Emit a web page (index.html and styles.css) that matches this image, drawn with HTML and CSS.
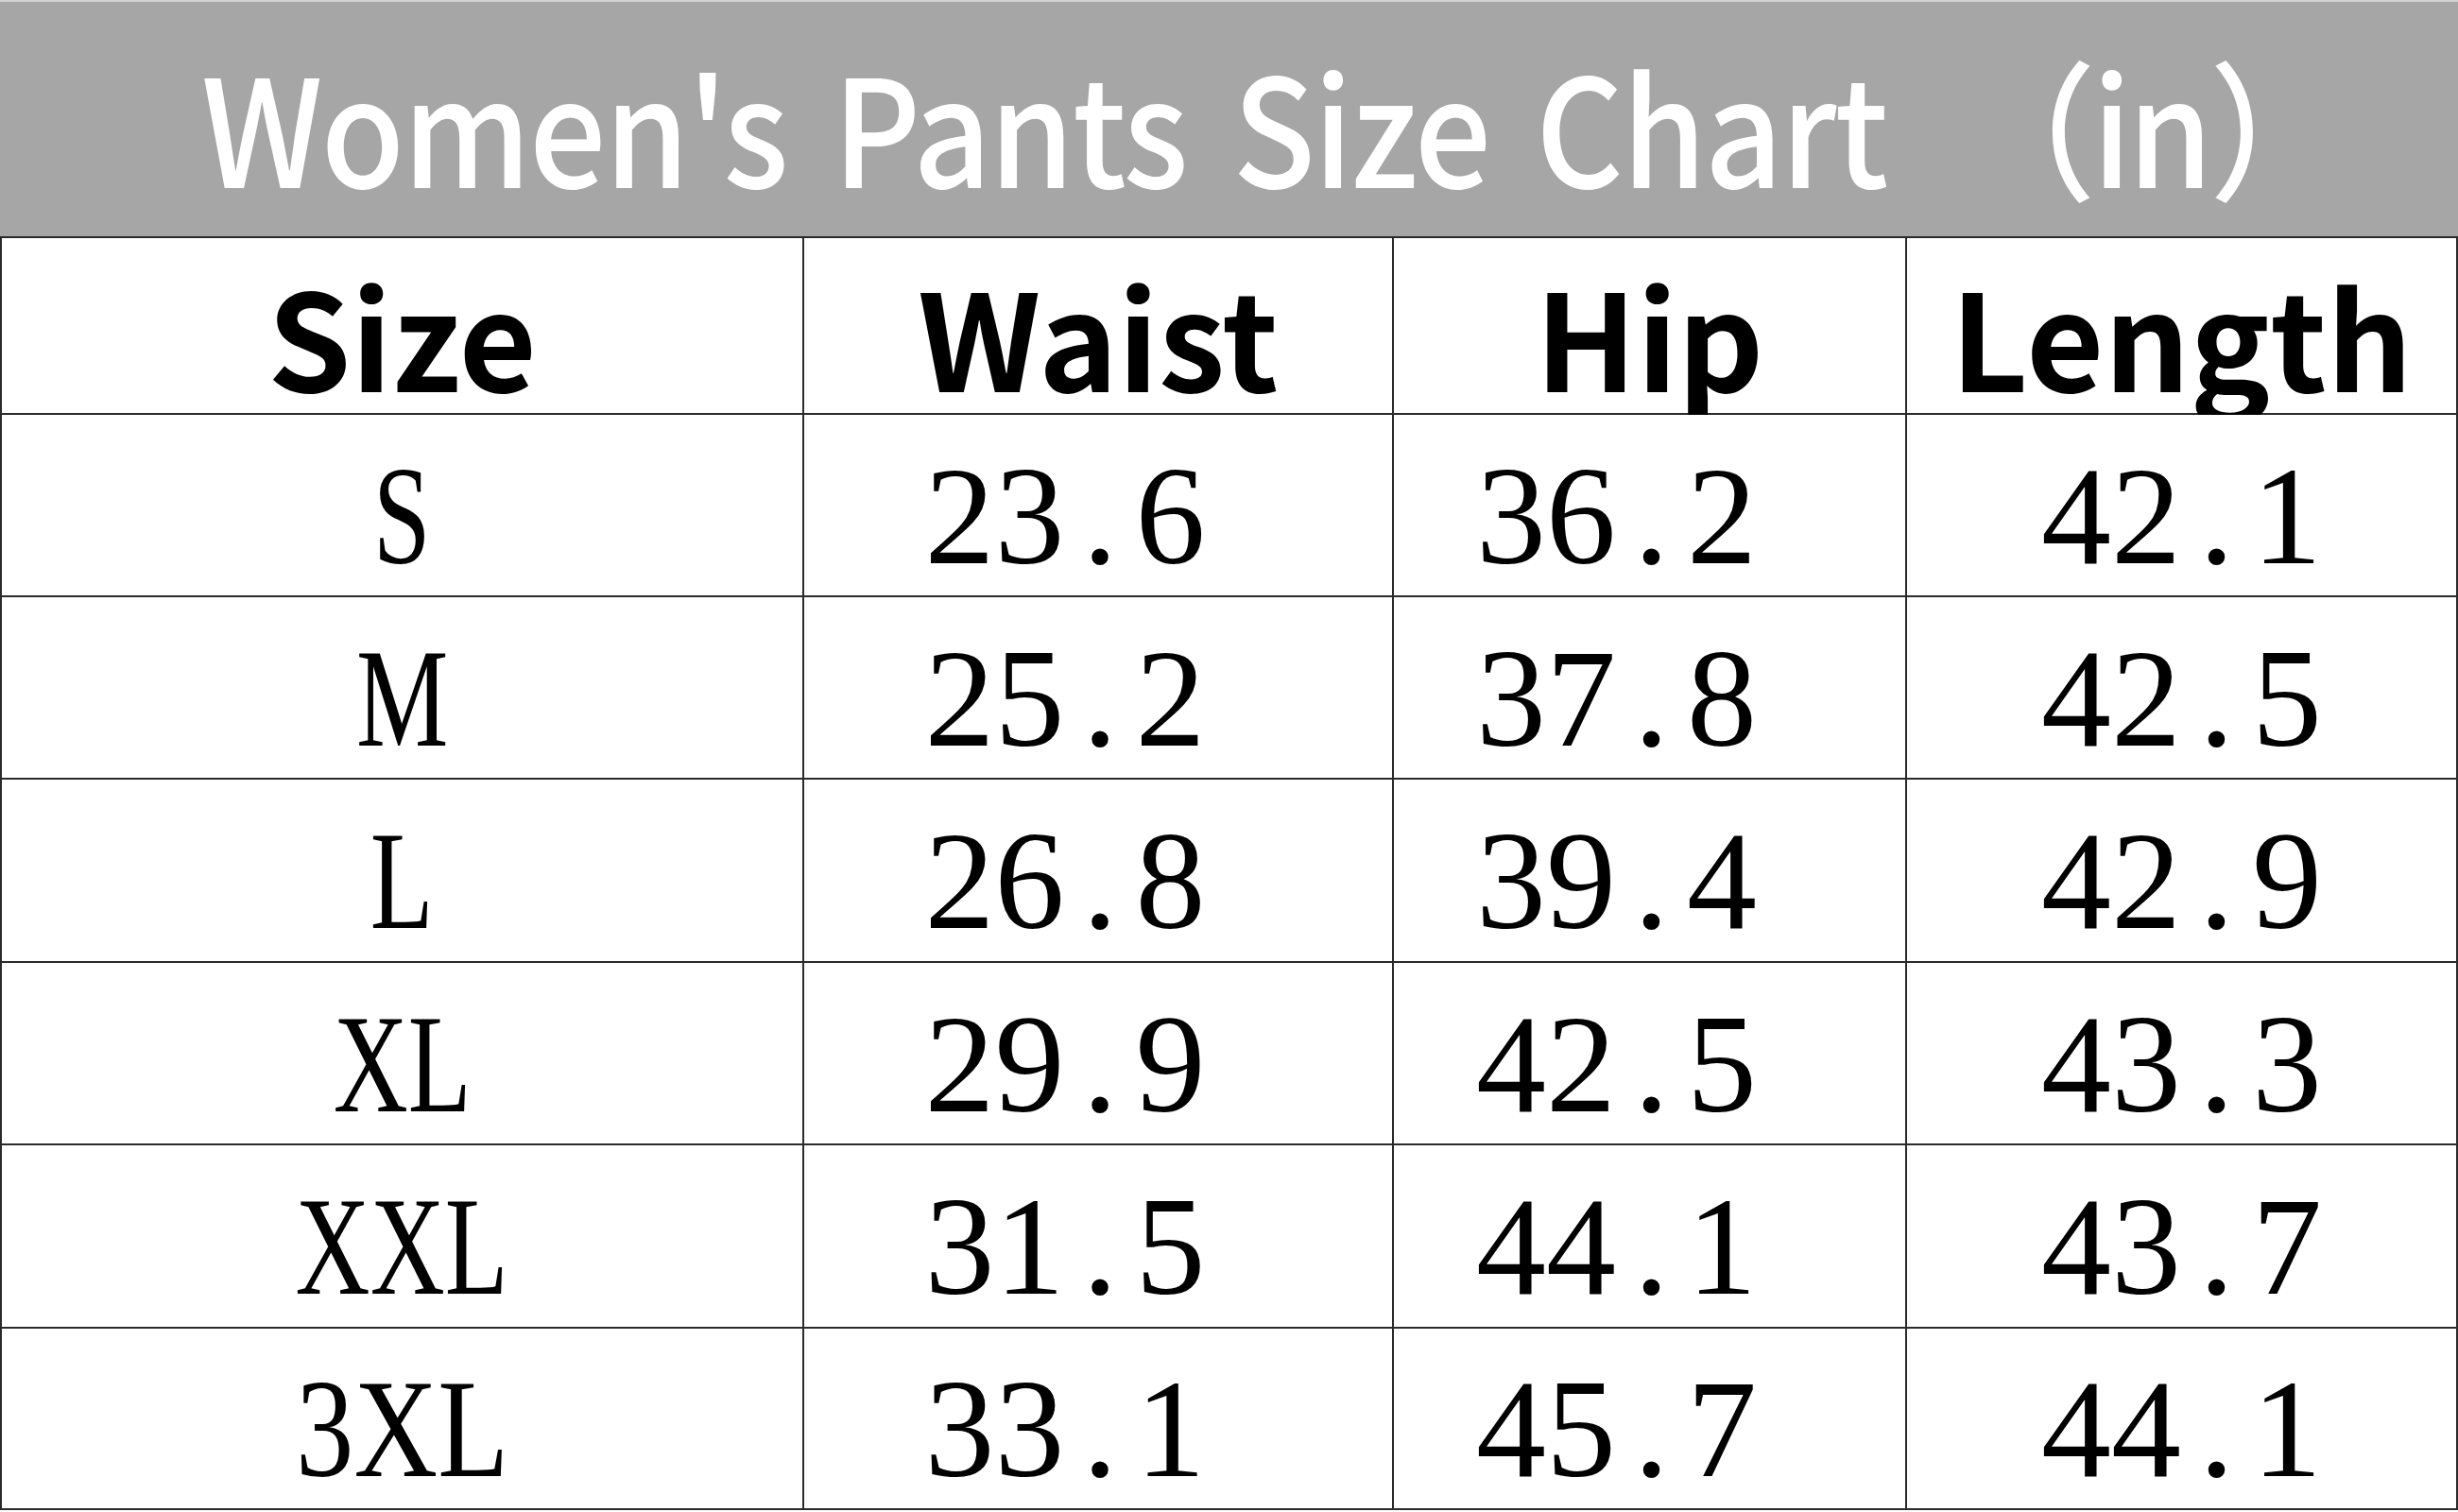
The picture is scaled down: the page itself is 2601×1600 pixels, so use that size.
FILE: index.html
```html
<!DOCTYPE html>
<html lang="en">
<head>
<meta charset="utf-8">
<title>Women's Pants Size Chart</title>
<link rel="stylesheet" href="styles.css">
</head>
<body>
<div class="chart">
  <div class="title"><span class="title-text"><span class="title-main">Women's Pants Size Chart</span><span class="title-unit">（in）</span></span></div>
  <div class="grid">
    <div class="cell head">Size</div>
    <div class="cell head">Waist</div>
    <div class="cell head">Hip</div>
    <div class="cell head">Length</div>

    <div class="cell"><span class="val letters">S</span></div>
    <div class="cell shift"><span class="val">23<span class="dot">.</span>6</span></div>
    <div class="cell shift"><span class="val">36<span class="dot">.</span>2</span></div>
    <div class="cell"><span class="val">42<span class="dot">.</span>1</span></div>

    <div class="cell"><span class="val letters">M</span></div>
    <div class="cell shift"><span class="val">25<span class="dot">.</span>2</span></div>
    <div class="cell shift"><span class="val">37<span class="dot">.</span>8</span></div>
    <div class="cell"><span class="val">42<span class="dot">.</span>5</span></div>

    <div class="cell"><span class="val letters">L</span></div>
    <div class="cell shift"><span class="val">26<span class="dot">.</span>8</span></div>
    <div class="cell shift"><span class="val">39<span class="dot">.</span>4</span></div>
    <div class="cell"><span class="val">42<span class="dot">.</span>9</span></div>

    <div class="cell"><span class="val letters">XL</span></div>
    <div class="cell shift"><span class="val">29<span class="dot">.</span>9</span></div>
    <div class="cell shift"><span class="val">42<span class="dot">.</span>5</span></div>
    <div class="cell"><span class="val">43<span class="dot">.</span>3</span></div>

    <div class="cell"><span class="val letters">XXL</span></div>
    <div class="cell shift"><span class="val">31<span class="dot">.</span>5</span></div>
    <div class="cell shift"><span class="val">44<span class="dot">.</span>1</span></div>
    <div class="cell"><span class="val">43<span class="dot">.</span>7</span></div>

    <div class="cell"><span class="val letters wide">3XL</span></div>
    <div class="cell shift"><span class="val">33<span class="dot">.</span>1</span></div>
    <div class="cell shift"><span class="val">45<span class="dot">.</span>7</span></div>
    <div class="cell"><span class="val">44<span class="dot">.</span>1</span></div>
  </div>
</div>
</body>
</html>
```
FILE: styles.css
```css
html, body {
  margin: 0;
  padding: 0;
  background: #ffffff;
}
.chart {
  width: 2601px;
  height: 1600px;
  overflow: hidden;
}
.title {
  height: 250px;
  border-top: 2px solid #d2d2d2;
  background: #a6a6a6;
  color: #ffffff;
  display: flex;
  align-items: center;
  justify-content: center;
  font-family: "Noto Sans CJK SC", "Noto Sans", sans-serif;
  font-weight: 500;
  font-size: 158px;
  line-height: 1;
  padding-top: 10px;
  box-sizing: border-box;
}
.title-text {
  display: inline-block;
  white-space: nowrap;
  margin-left: 90px;
  transform: scaleX(0.91);
  transform-origin: center;
}
.title-main {
  letter-spacing: -2px;
  word-spacing: 20px;
}
.title-unit {
  margin-left: 85px;
  letter-spacing: -4px;
}
.grid {
  display: grid;
  grid-template-columns: 847px 622px 541px 581px;
  grid-template-rows: 185px 191px 191px 192px 191px 192px 190px;
  gap: 2px;
  padding: 2px;
  background: #2a2a2a;
}
.cell {
  background: #ffffff;
  display: flex;
  align-items: center;
  justify-content: center;
  color: #000000;
  padding-top: 22px;
  box-sizing: border-box;
}
.head {
  font-family: "Noto Sans CJK SC", "Noto Sans", sans-serif;
  font-weight: 700;
  font-size: 142px;
  line-height: 1;
  padding-top: 16px;
}
.shift {
  padding-right: 70px;
}
.val {
  display: inline-block;
  font-family: "Liberation Serif", serif;
  font-size: 148px;
  line-height: 1;
}
.letters {
  transform: scaleX(0.74);
}
.letters.wide {
  transform: scaleX(0.83);
}
.dot {
  display: inline-block;
  width: 75px;
  text-align: center;
}
```
